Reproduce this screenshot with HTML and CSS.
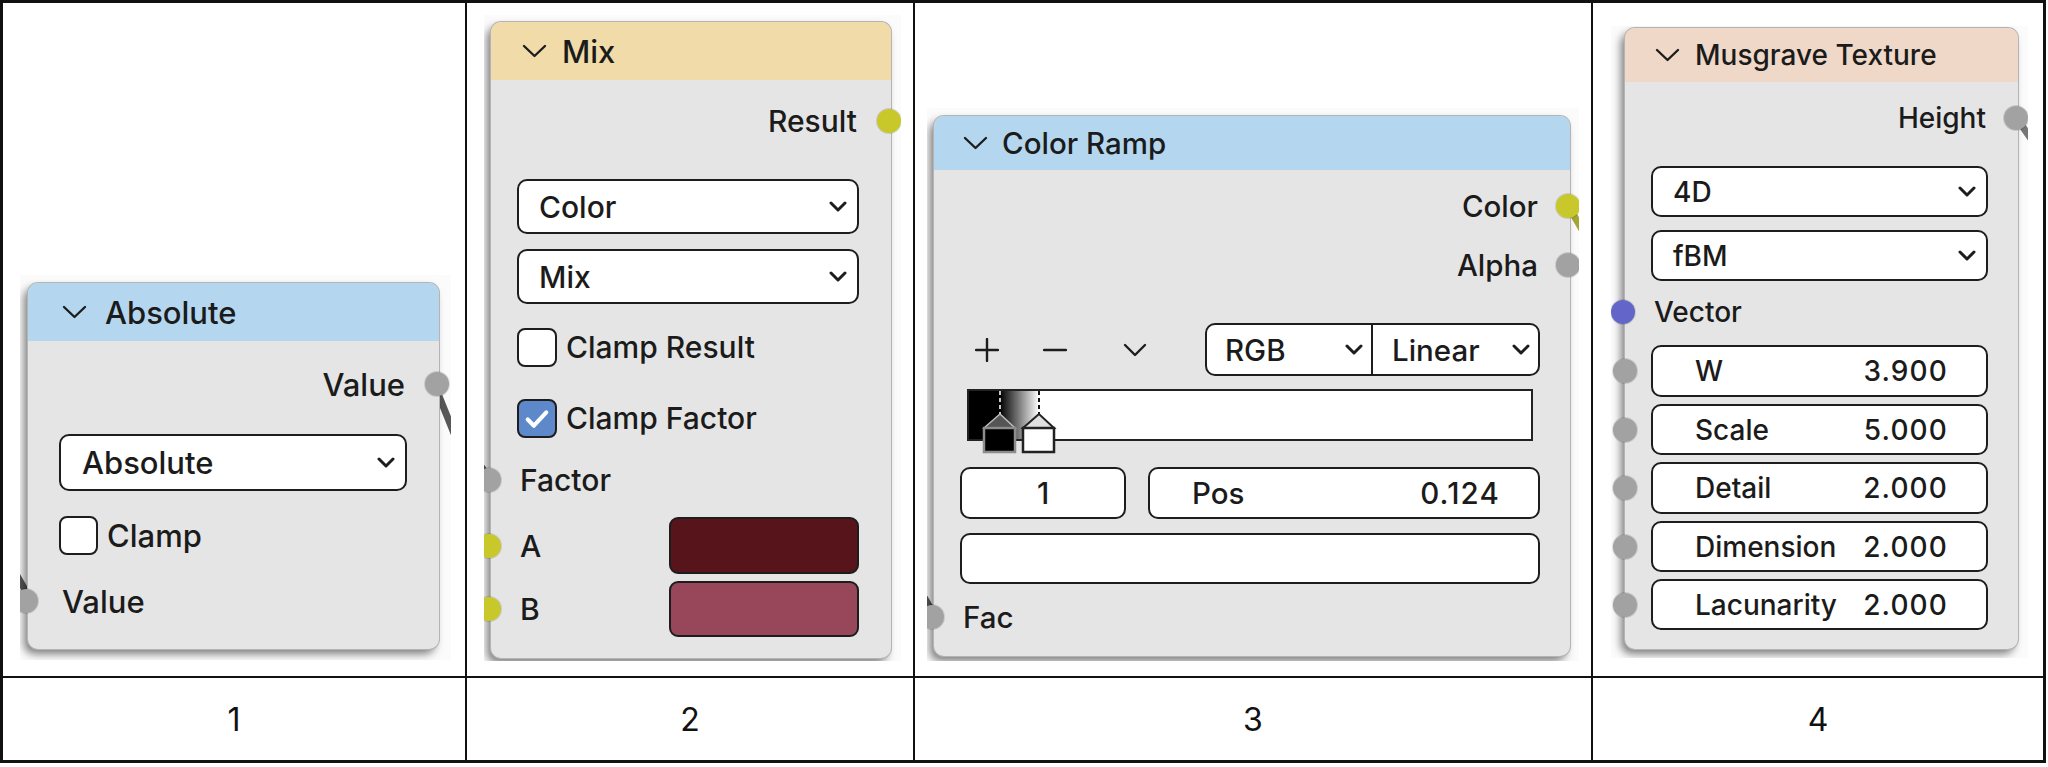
FILE: index.html
```html
<!DOCTYPE html>
<html lang="en">
<head>
    <meta charset="UTF-8">
    <title>Blender nodes</title>
    <link rel="stylesheet" href="styles.css">
</head>
<body>
<div class="sheet">

    <!-- 1: Absolute -->
    <div class="cell c1">
        <div class="shot">
            <div class="wire w-out"></div>
            <div class="wire w-in"></div>
            <div class="node n1">
                <div class="head blue">
                    <svg class="chev" viewBox="0 0 25 14"><polyline points="2,2 12.5,12 23,2"/></svg>
                    <span>Absolute</span>
                </div>
                <div class="body">
                    <div class="row out r1"><span>Value</span><i class="sock grey"></i></div>
                    <div class="dd r2"><span>Absolute</span><svg class="ddchev" viewBox="0 0 18 11"><polyline points="2,2 9,9 16,2"/></svg></div>
                    <div class="row check r3"><b class="box"></b><span>Clamp</span></div>
                    <div class="row in r4"><i class="sock grey"></i><span>Value</span></div>
                </div>
            </div>
        </div>
    </div>

    <!-- 2: Mix -->
    <div class="cell c2">
        <div class="shot">
            <div class="wire w-fac"></div>
            <div class="node n2">
                <div class="head sand">
                    <svg class="chev" viewBox="0 0 25 14"><polyline points="2,2 12.5,12 23,2"/></svg>
                    <span>Mix</span>
                </div>
                <div class="body">
                    <div class="row out r1"><span>Result</span><i class="sock yellow"></i></div>
                    <div class="dd r2"><span>Color</span><svg class="ddchev" viewBox="0 0 18 11"><polyline points="2,2 9,9 16,2"/></svg></div>
                    <div class="dd r3"><span>Mix</span><svg class="ddchev" viewBox="0 0 18 11"><polyline points="2,2 9,9 16,2"/></svg></div>
                    <div class="row check r4"><b class="box"></b><span>Clamp Result</span></div>
                    <div class="row check r5">
                        <b class="box on"><svg viewBox="0 0 34 34"><polyline points="8,18 14,24 26,11"/></svg></b>
                        <span>Clamp Factor</span>
                    </div>
                    <div class="row in r6"><i class="sock grey"></i><span>Factor</span></div>
                    <div class="row in r7"><i class="sock yellow"></i><span>A</span><b class="swatch dark"></b></div>
                    <div class="row in r8"><i class="sock yellow"></i><span>B</span><b class="swatch rose"></b></div>
                </div>
            </div>
        </div>
    </div>

    <!-- 3: Color Ramp -->
    <div class="cell c3">
        <div class="shot">
            <div class="wire w-color"></div>
            <div class="wire w-fac"></div>
            <div class="node n3">
                <div class="head blue">
                    <svg class="chev" viewBox="0 0 25 14"><polyline points="2,2 12.5,12 23,2"/></svg>
                    <span>Color Ramp</span>
                </div>
                <div class="body">
                    <div class="row out r1"><span>Color</span><i class="sock yellow"></i></div>
                    <div class="row out r2"><span>Alpha</span><i class="sock grey"></i></div>
                    <div class="tools r3">
                        <svg class="tool plus" viewBox="0 0 24 24"><path d="M12 1v22M1 12h22"/></svg>
                        <svg class="tool minus" viewBox="0 0 24 4"><path d="M1 2h22"/></svg>
                        <svg class="tool more" viewBox="0 0 24 14"><polyline points="2,2 12,12 22,2"/></svg>
                        <div class="combo">
                            <div class="half"><span>RGB</span><svg class="ddchev" viewBox="0 0 18 11"><polyline points="2,2 9,9 16,2"/></svg></div>
                            <div class="half"><span>Linear</span><svg class="ddchev" viewBox="0 0 18 11"><polyline points="2,2 9,9 16,2"/></svg></div>
                        </div>
                    </div>
                    <div class="ramp r4">
                        <svg class="stops" viewBox="0 0 120 70">
                            <path class="dash light" d="M33 2v23"/>
                            <path class="dash" d="M72 2v23"/>
                            <polygon class="tri-dark" points="33,25 17,39 48,39"/>
                            <rect class="stop-dark" x="17" y="39" width="31" height="24"/>
                            <polygon class="tri-light" points="72,25 56,39 87,39"/>
                            <rect class="stop-light" x="56" y="39" width="31" height="24"/>
                        </svg>
                    </div>
                    <div class="pair r5">
                        <div class="field idx"><span>1</span></div>
                        <div class="field pos"><span>Pos</span><span class="num-val">0.124</span></div>
                    </div>
                    <div class="field blank r6"></div>
                    <div class="row in r7"><i class="sock grey"></i><span>Fac</span></div>
                </div>
            </div>
        </div>
    </div>

    <!-- 4: Musgrave Texture -->
    <div class="cell c4">
        <div class="shot">
            <div class="wire w-height"></div>
            <div class="node n4">
                <div class="head peach">
                    <svg class="chev" viewBox="0 0 25 14"><polyline points="2,2 12.5,12 23,2"/></svg>
                    <span>Musgrave Texture</span>
                </div>
                <div class="body">
                    <div class="row out r1"><span>Height</span><i class="sock grey"></i></div>
                    <div class="dd r2"><span>4D</span><svg class="ddchev" viewBox="0 0 18 11"><polyline points="2,2 9,9 16,2"/></svg></div>
                    <div class="dd r3"><span>fBM</span><svg class="ddchev" viewBox="0 0 18 11"><polyline points="2,2 9,9 16,2"/></svg></div>
                    <div class="row in r4"><i class="sock blue"></i><span>Vector</span></div>
                    <div class="field r5"><i class="sock grey"></i><span>W</span><span class="num-val">3.900</span></div>
                    <div class="field r6"><i class="sock grey"></i><span>Scale</span><span class="num-val">5.000</span></div>
                    <div class="field r7"><i class="sock grey"></i><span>Detail</span><span class="num-val">2.000</span></div>
                    <div class="field r8"><i class="sock grey"></i><span>Dimension</span><span class="num-val">2.000</span></div>
                    <div class="field r9"><i class="sock grey"></i><span>Lacunarity</span><span class="num-val">2.000</span></div>
                </div>
            </div>
        </div>
    </div>

    <div class="num">1</div>
    <div class="num">2</div>
    <div class="num">3</div>
    <div class="num">4</div>
</div>
</body>
</html>
```

FILE: styles.css
```css
body {
    margin: 0;
    background: #fff;
    font-family: Inter, "Noto Sans", sans-serif;
    color: #1b1b1b;
}

.sheet {
    display: grid;
    grid-template-columns: 462px 446px 676px 450px;
    grid-template-rows: 673px 82px;
    gap: 2px;
    width: 2040px;
    border: 3px solid #111;
    background: #111;
}

.cell {
    background: #fff;
    display: flex;
    align-items: flex-start;
}

.num {
    background: #fff;
    display: flex;
    align-items: center;
    justify-content: center;
    font-size: 32px;
    color: #111;
}

/* screenshot crop around each node */
.shot {
    position: relative;
    overflow: hidden;
    background: #fbfbfb;
}

.c1 .shot { margin: 272px 0 0 17px; padding: 8px 12px 11px 8px; }
.c2 .shot { margin: 12px 0 0 17px; padding: 7px 10px 3px 7px; }
.c3 .shot { margin: 105px 0 0 12px; padding: 8px 9px 5px 7px; }
.c4 .shot { margin: 23px 0 0 18px; padding: 2px 10px 9px 14px; }

/* links leaving the sockets */
.wire {
    position: absolute;
    width: 7px;
    height: 60px;
    background: #575757;
}

.c1 .w-out { left: 411px; top: 110px; height: 70px; transform-origin: top center; transform: rotate(-22deg); }
.c1 .w-in { left: 8px; top: 266px; transform-origin: bottom center; transform: rotate(-30deg); }
.c2 .w-fac { left: 3px; top: 405px; transform-origin: bottom center; transform: rotate(-35deg); }
.c3 .w-color { left: 638px; top: 98px; background: #a5a533; transform-origin: top center; transform: rotate(-30deg); }
.c3 .w-fac { left: 5px; top: 449px; transform-origin: bottom center; transform: rotate(-30deg); }
.c4 .w-height { left: 402px; top: 92px; background: #777; transform-origin: top center; transform: rotate(-35deg); }

/* node */
.node {
    position: relative;
    background: #e5e5e5;
    border-radius: 10px;
    box-shadow: 0 0 0 1px #b4b4b4, -4px 5px 8px rgba(0, 0, 0, 0.5);
    font-weight: 500;
}

.head {
    display: flex;
    align-items: center;
    border-radius: 10px 10px 0 0;
}

.head.blue { background: #b4d7ef; }
.head.sand { background: #f1dba8; }
.head.peach { background: #efd8c7; }

.chev {
    width: 25px;
    height: 14px;
    flex-shrink: 0;
}

.chev polyline,
.ddchev polyline,
.tool path,
.tool polyline {
    fill: none;
    stroke: #1d1d1d;
    stroke-width: 2.4;
    stroke-linecap: round;
    stroke-linejoin: round;
}

.body {
    display: flex;
    flex-direction: column;
    padding: 0 var(--pr) 0 var(--pl);
}

.row {
    position: relative;
    display: flex;
    align-items: center;
}

.row.out { justify-content: flex-end; padding-right: 2px; }
.row.in { padding-left: 3px; }

.sock {
    position: absolute;
    top: 50%;
    width: 24px;
    height: 24px;
    margin-top: -12px;
    border-radius: 50%;
    box-shadow: 0 0 0 1px rgba(0, 0, 0, 0.12);
}

.out .sock { right: calc(-1 * var(--pr) - 10px); }
.in .sock,
.field .sock { left: calc(-1 * var(--pl) - 14px); }

.sock.grey { background: #a2a2a2; }
.sock.yellow { background: #c8c82b; }
.sock.blue { background: #6465c9; }

/* dropdowns and fields */
.dd,
.field,
.combo {
    position: relative;
    display: flex;
    align-items: center;
    justify-content: space-between;
    box-sizing: border-box;
    background: #fff;
    border: 2.5px solid #1d1d1d;
    border-radius: 10px;
}

.dd { padding: 0 10px 0 20px; }

.ddchev {
    width: 18px;
    height: 11px;
    flex-shrink: 0;
}

.ddchev polyline { stroke-width: 3; }

.field { padding: 0 38px 0 42px; }

.num-val { letter-spacing: 0.04em; }

.check .box {
    display: block;
    width: 39px;
    height: 39px;
    box-sizing: border-box;
    margin-right: 9px;
    border: 2.5px solid #1d1d1d;
    border-radius: 8px;
    background: #fff;
}

.check .box.on { background: #5d88c9; }

.box svg { display: block; width: 100%; height: 100%; }

.box polyline {
    fill: none;
    stroke: #fff;
    stroke-width: 4;
    stroke-linecap: round;
    stroke-linejoin: round;
}

.swatch {
    display: block;
    width: 190px;
    height: 100%;
    box-sizing: border-box;
    margin-left: auto;
    border: 2.5px solid #1d1d1d;
    border-radius: 9px;
}

.swatch.dark { background: #58141b; }
.swatch.rose { background: #98475a; }

/* node 1 */
.n1 { width: 411px; font-size: 31px; --pl: 31px; --pr: 32px; }
.n1 .head { height: 58px; padding-left: 34px; gap: 18px; }
.n1 .r1 { margin-top: 17px; height: 52px; }
.n1 .r2 { margin-top: 24px; height: 57px; padding-left: 21px; }
.n1 .r3 { margin-top: 19px; height: 50px; }
.n1 .r4 { margin-top: 15px; height: 52px; }
.n1 .body { padding-bottom: 22px; }

/* node 2 */
.n2 { width: 400px; font-size: 30px; --pl: 26px; --pr: 32px; }
.n2 .head { height: 58px; padding-left: 31px; gap: 15px; font-size: 31px; }
.n2 .r1 { margin-top: 15px; height: 52px; }
.n2 .r2 { margin-top: 32px; height: 55px; }
.n2 .r3 { margin-top: 15px; height: 55px; }
.n2 .r4 { margin-top: 18px; height: 50px; }
.n2 .r5 { margin-top: 21px; height: 50px; }
.n2 .r6 { margin-top: 12px; height: 50px; }
.n2 .r7 { margin-top: 12px; height: 57px; }
.n2 .r8 { margin-top: 7px; height: 56px; }
.n2 .body { padding-bottom: 21px; }
.n2 .check .box { width: 40px; margin-right: 9px; }

/* node 3 */
.n3 { width: 636px; font-size: 29.5px; --pl: 26px; --pr: 30px; }
.n3 .head { height: 54px; padding-left: 29px; gap: 14px; }
.n3 .r1 { margin-top: 11px; height: 50px; }
.n3 .r2 { margin-top: 9px; height: 50px; }
.n3 .r3 { margin-top: 33px; height: 53px; }
.n3 .r4 { margin-top: 13px; height: 52px; }
.n3 .r5 { margin-top: 26px; height: 52px; }
.n3 .r6 { margin-top: 14px; height: 51px; }
.n3 .r7 { margin-top: 8px; height: 50px; }
.n3 .body { padding-bottom: 14px; }

.tools {
    display: flex;
    align-items: center;
}

.tool.plus { width: 24px; height: 24px; margin-left: 15px; }
.tool.minus { width: 24px; height: 4px; margin-left: 44px; }
.tool.more { width: 24px; height: 14px; margin-left: 56px; }

.combo {
    width: 335px;
    height: 100%;
    margin-left: auto;
    justify-content: flex-start;
}

.half {
    display: flex;
    align-items: center;
    justify-content: space-between;
    height: 100%;
    padding: 0 8px 0 18px;
    box-sizing: border-box;
}

.half:first-child { width: 164px; }
.half + .half { flex: 1; border-left: 2px solid #1d1d1d; padding-left: 19px; }

.ramp {
    position: relative;
    margin: 0 7px;
    box-sizing: border-box;
    border: 2px solid #222;
    background: linear-gradient(to right, #000 31px, #fff 70px);
}

.stops {
    position: absolute;
    left: -2px;
    top: -2px;
    width: 120px;
    height: 70px;
    overflow: visible;
}

.dash { stroke: #111; stroke-width: 2; stroke-dasharray: 4 3; }
.dash.light { stroke: #c8c8c8; }
.tri-dark { fill: #555; stroke: #bdbdbd; stroke-width: 1.5; }
.stop-dark { fill: #000; stroke: #8c8c8c; stroke-width: 2.5; }
.tri-light { fill: #e0e0e0; stroke: #222; stroke-width: 2; }
.stop-light { fill: #fff; stroke: #222; stroke-width: 2.5; }

.pair {
    display: flex;
    gap: 22px;
}

.field.idx {
    width: 166px;
    justify-content: center;
    padding: 0;
}

.field.pos {
    flex: 1;
    padding: 0 38px 0 42px;
}

/* node 4 */
.n4 { width: 393px; font-size: 28px; --pl: 26px; --pr: 30px; }
.n4 .head { height: 54px; padding-left: 30px; gap: 15px; }
.n4 .r1 { margin-top: 11px; height: 50px; }
.n4 .r2 { margin-top: 23px; height: 51px; }
.n4 .r3 { margin-top: 13px; height: 51px; }
.n4 .r4 { margin-top: 9px; height: 44px; }
.n4 .r5 { margin-top: 11px; height: 52px; }
.n4 .r6 { margin-top: 7px; height: 51px; }
.n4 .r7 { margin-top: 7px; height: 52px; }
.n4 .r8 { margin-top: 7px; height: 51px; }
.n4 .r9 { margin-top: 7px; height: 51px; }
.n4 .body { padding-bottom: 19px; }
```
